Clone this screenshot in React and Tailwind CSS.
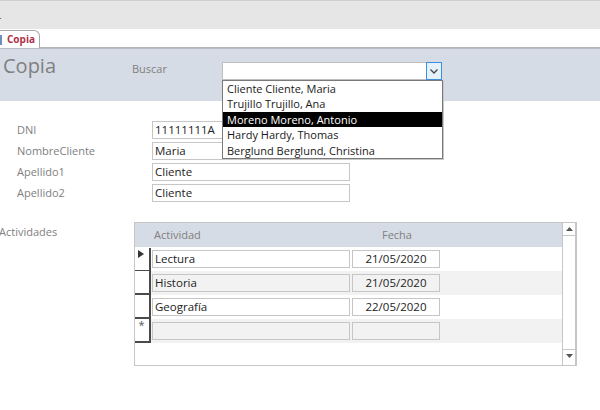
import React from "react";

const clientes = [
  "Cliente Cliente, Maria",
  "Trujillo Trujillo, Ana",
  "Moreno Moreno, Antonio",
  "Hardy Hardy, Thomas",
  "Berglund Berglund, Christina",
];

const campos = [
  ["DNI", "11111111A"],
  ["NombreCliente", "Maria"],
  ["Apellido1", "Cliente"],
  ["Apellido2", "Cliente"],
];

const actividades = [
  { nombre: "Lectura", fecha: "21/05/2020", actual: true },
  { nombre: "Historia", fecha: "21/05/2020" },
  { nombre: "Geografía", fecha: "22/05/2020" },
];

function Selector({ mark, first }) {
  return (
    <div
      className={`flex h-[24px] w-[16px] shrink-0 items-start justify-center border-r-2 border-b-2 border-[#4a4a4a] bg-white ${first ? "mt-[1px] h-[23px]" : ""}`}
    >
      {mark === "arrow" && (
        <svg width="6" height="8" viewBox="0 0 6 8" className="mt-[2px] -ml-[2px]">
          <path d="M0 0 L6 4 L0 8 Z" fill="#333" />
        </svg>
      )}
      {mark === "new" && (
        <span className="-ml-[1px] text-[11px] leading-[12px] text-[#555]">*</span>
      )}
    </div>
  );
}

function Fila({ nombre, fecha, gris, mark, first }) {
  const caja = gris ? "bg-[#f2f2f2]" : "bg-white";
  return (
    <div className={`flex h-[24px] ${caja}`}>
      <Selector mark={mark} first={first} />
      <div className={`ml-[1px] mt-[3px] flex h-[18px] w-[198px] items-center border border-[#c6c6c6] px-[2px] text-[11.5px] text-[#222] ${caja}`}>
        {nombre}
      </div>
      <div className={`ml-[2px] mt-[3px] flex h-[18px] w-[88px] items-center justify-center border border-[#c6c6c6] text-[11.5px] text-[#222] ${caja}`}>
        {fecha}
      </div>
    </div>
  );
}

export default function App() {
  return (
    <div
      className="relative h-[410px] w-[600px] overflow-hidden bg-white"
      style={{ fontFamily: '"Open Sans", "Noto Sans", sans-serif' }}
    >
      {/* barra superior */}
      <div className="h-[29px] border-t border-[#cfcfcf] bg-[#e6e6e6] pt-[5px]">
        <span className="-ml-[3px] text-[10px] text-[#444]">r</span>
      </div>

      {/* pestaña */}
      <div className="flex h-[19px] items-end bg-white">
        <div className="flex h-[18px] w-[40px] items-center rounded-tr-[6px] border-t border-r border-[#a8a8a8] bg-white">
          <div className="h-[10px] w-[2px] bg-[#6d8fc0]" />
          <span className="ml-[5px] text-[10px] font-bold text-[#b0304a]">Copia</span>
        </div>
        <div className="h-px flex-1 bg-[#b4b4b4]" />
      </div>

      {/* cabecera */}
      <div className="flex h-[53px] border-t border-[#b8bcc4] bg-[#d6dce5]">
        <div className="w-[132px] pl-[3px] pt-[3px] text-[20px] leading-[28px] text-[#808080]">Copia</div>
        <div className="w-[90px] pt-[13px] text-[11px] leading-[14px] text-[#808080]">Buscar</div>
        <div className="relative mt-[13px] h-[18px] w-[220px]">
          <div className="flex h-[18px] border border-[#bfbfbf] bg-white">
            <div className="flex-1" />
            <div className="-mt-px -mr-px flex h-[18px] w-[16px] items-center justify-center border border-[#3c8ddd] bg-[#e5f1fb]">
              <svg width="8" height="5" viewBox="0 0 8 5">
                <path d="M0.5 0.5 L4 4 L7.5 0.5" fill="none" stroke="#444" strokeWidth="1.3" />
              </svg>
            </div>
          </div>
          <div className="absolute left-0 top-[18px] z-10 w-[221px] border border-[#7a7a7a] bg-white shadow-[1px_1px_0_#c8c8c8]">
            {clientes.map((c, i) => (
              <div
                key={c}
                className={`h-[15.4px] pl-[4px] text-[11px] leading-[15px] ${i === 2 ? "bg-black text-white" : "text-[#1a1a1a]"}`}
              >
                {c}
              </div>
            ))}
          </div>
        </div>
      </div>

      {/* campos */}
      <div className="mt-[20px] flex flex-col gap-[3px]">
        {campos.map(([l, v]) => (
          <div key={l} className="flex h-[18px] items-center">
            <div className="w-[152px] pl-[17px] text-[11px] text-[#808080]">{l}</div>
            <div className="flex h-[18px] w-[198px] items-center border border-[#c6c6c6] px-[2px] text-[11.5px] text-[#222]">
              {v}
            </div>
          </div>
        ))}
      </div>

      {/* subformulario */}
      <div className="mt-[20px] flex">
        <div className="-ml-[1px] w-[135px] pt-[2px] text-[11px] text-[#808080]">Actividades</div>
        <div className="flex h-[144px] w-[443px] border border-[#c6c6c6] bg-white">
          <div className="flex-1">
            <div className="flex h-[24px] bg-[#d6dce5] text-[11px] text-[#808080]">
              <div className="w-[17px]" />
              <div className="w-[201px] pl-[2px] pt-[4px]">Actividad</div>
              <div className="w-[88px] pt-[4px] text-center">Fecha</div>
            </div>
            {actividades.map((a, i) => (
              <Fila key={a.nombre} nombre={a.nombre} fecha={a.fecha} gris={i === 1} mark={a.actual ? "arrow" : null} first={i === 0} />
            ))}
            <Fila nombre="" fecha="" gris mark="new" />
          </div>
          <div className="flex w-[14px] flex-col border-l border-r border-[#c6c6c6] bg-white">
            <div className="flex h-[13px] items-center justify-center border-b border-[#c6c6c6]">
              <svg width="7" height="4" viewBox="0 0 7 4">
                <path d="M0 4 L3.5 0 L7 4 Z" fill="#555" />
              </svg>
            </div>
            <div className="flex-1" />
            <div className="mb-[3px] flex h-[13px] items-center justify-center border-t border-[#c6c6c6]">
              <svg width="7" height="4" viewBox="0 0 7 4">
                <path d="M0 0 L3.5 4 L7 0 Z" fill="#555" />
              </svg>
            </div>
          </div>
        </div>
      </div>
    </div>
  );
}
